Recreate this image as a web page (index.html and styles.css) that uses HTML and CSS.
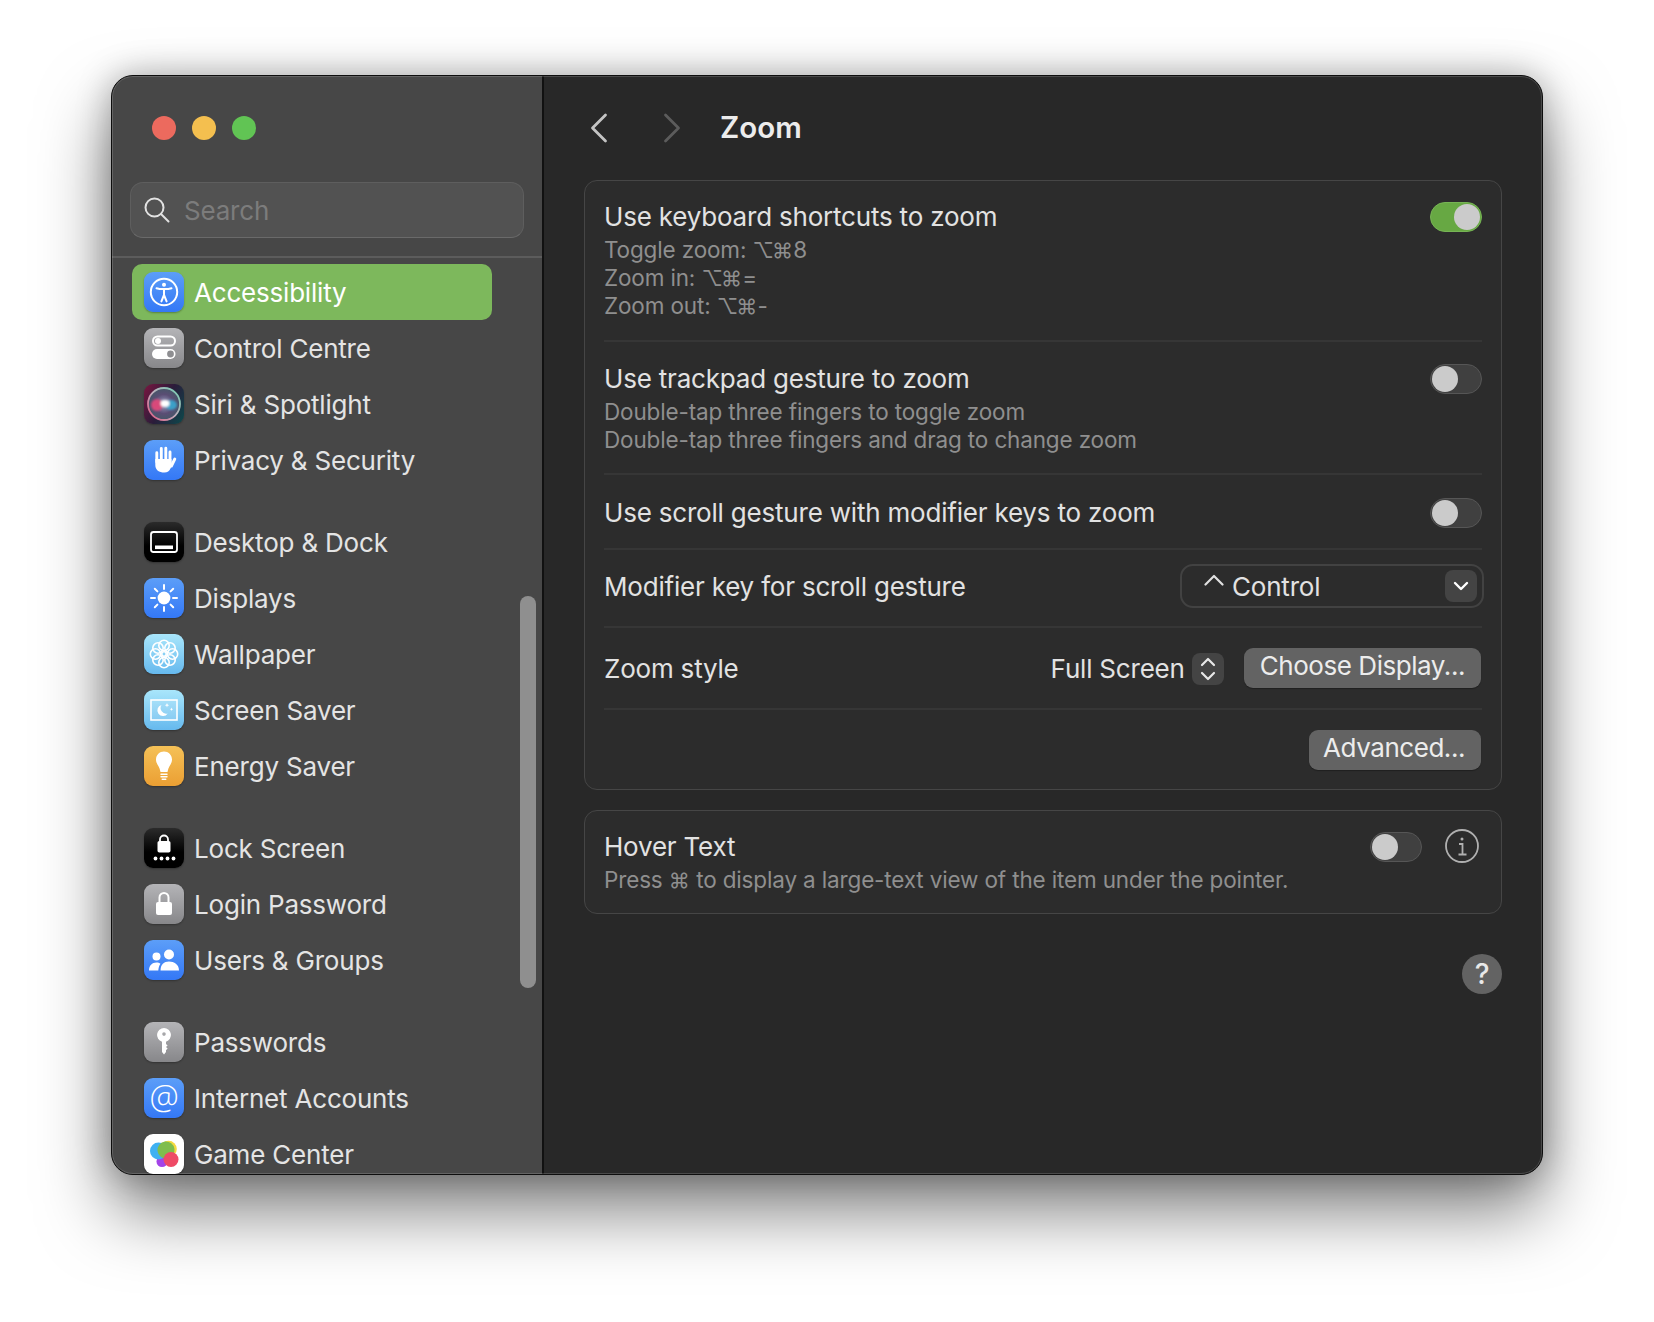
FILE: index.html
```html
<!DOCTYPE html>
<html lang="en">
<head>
<meta charset="utf-8">
<title>Zoom</title>
<link rel="stylesheet" href="styles.css">
</head>
<body>
<svg class="defs" width="0" height="0" aria-hidden="true">
  <defs>
    <radialGradient id="siriRing" cx="50%" cy="50%" r="50%">
      <stop offset="0%" stop-color="#9aa0c4"/>
      <stop offset="60%" stop-color="#5a4d74"/>
      <stop offset="100%" stop-color="#465668"/>
    </radialGradient>
    <linearGradient id="siriEdge" x1="0" y1="1" x2="1" y2="0">
      <stop offset="0%" stop-color="#e0557f"/>
      <stop offset="50%" stop-color="#c0aebd"/>
      <stop offset="100%" stop-color="#6ccfb0"/>
    </linearGradient>
    <filter id="soft"><feGaussianBlur stdDeviation="1.300"/></filter>
  </defs>
</svg>
<div class="window">
  <aside class="sidebar">
    <div class="lights">
      <span class="light red"></span><span class="light yellow"></span><span class="light green"></span>
    </div>
    <div class="search">
      <svg class="search-ico" viewBox="0 0 26 26" fill="none" stroke="#e2e2e2" stroke-width="2" stroke-linecap="round"><circle cx="10.500" cy="10.500" r="9"/><path d="M17 17 24.500 24.500"/></svg>
      <span class="search-text">Search</span>
    </div>
    <nav class="nav">
      <div class="group">
        <div class="item selected"><span class="icon blue">
          <svg viewBox="0 0 40 40" fill="none" stroke="#fff" stroke-width="2"><circle cx="20" cy="20" r="13.200"/><circle cx="20" cy="12.800" r="2" fill="#fff" stroke="none"/><path d="M12.500 16.200 C16 17.400 24 17.400 27.500 16.200" stroke-linecap="round"/><path d="M20 17v6M20 23l-2.600 6.400M20 23l2.600 6.400" stroke-linecap="round"/></svg>
        </span><span>Accessibility</span></div>
        <div class="item"><span class="icon gray">
          <svg viewBox="0 0 40 40"><rect x="9" y="8.500" width="22" height="9" rx="4.500" fill="none" stroke="#fff" stroke-width="2"/><circle cx="14" cy="13" r="3" fill="#fff"/><rect x="8" y="21" width="23.500" height="10" rx="5" fill="#fff"/><circle cx="26.500" cy="26" r="3.400" fill="#8e8e91"/></svg>
        </span><span>Control Centre</span></div>
        <div class="item"><span class="icon siri">
          <svg viewBox="0 0 40 40"><circle cx="20" cy="20" r="16" fill="url(#siriRing)" stroke="url(#siriEdge)" stroke-width="1.800"/><g filter="url(#soft)"><ellipse cx="13" cy="21" rx="6" ry="6" fill="#d9487a"/><ellipse cx="27" cy="21" rx="6" ry="5" fill="#3aa0c8"/><ellipse cx="21" cy="19.500" rx="4.500" ry="3.400" fill="#fff"/></g></svg>
        </span><span>Siri &amp; Spotlight</span></div>
        <div class="item"><span class="icon blue">
          <svg viewBox="0 0 40 40" fill="#fff" stroke="#fff" stroke-linecap="round"><path stroke-width="2.900" d="M12.800 22V12.800M17.300 20V8.500M21.800 20V8.200M26 22V12M27.400 26 30.800 19"/><path stroke="none" d="M11.300 19H27.500V24L29 23.500 26.500 28.500C25.400 30.900 23.400 32.500 20.500 32.500 15 32.500 11.300 30 11.300 25Z"/></svg>
        </span><span>Privacy &amp; Security</span></div>
      </div>
      <div class="group">
        <div class="item"><span class="icon black">
          <svg viewBox="0 0 40 40"><rect x="7" y="10" width="26" height="20" rx="2.500" fill="none" stroke="#fff" stroke-width="1.800"/><rect x="11" y="23.500" width="18" height="3.600" fill="#fff"/></svg>
        </span><span>Desktop &amp; Dock</span></div>
        <div class="item"><span class="icon blue">
          <svg viewBox="0 0 40 40" stroke="#fff" stroke-width="2" stroke-linecap="round"><circle cx="20" cy="20" r="6.400" fill="#fff" stroke="none"/><path d="M20 7v4M20 29v4M7 20h4M29 20h4M10.800 10.800l2.600 2.600M26.600 26.600l2.600 2.600M10.800 29.200l2.600-2.600M26.600 13.400l2.600-2.600"/></svg>
        </span><span>Displays</span></div>
        <div class="item"><span class="icon sky">
          <svg viewBox="0 0 40 40" fill="none" stroke="#fff" stroke-width="1.600"><circle cx="20" cy="20" r="2.200"/><circle cx="20" cy="11.500" r="5.200"/><circle cx="26" cy="14" r="5.200"/><circle cx="28.500" cy="20" r="5.200"/><circle cx="26" cy="26" r="5.200"/><circle cx="20" cy="28.500" r="5.200"/><circle cx="14" cy="26" r="5.200"/><circle cx="11.500" cy="20" r="5.200"/><circle cx="14" cy="14" r="5.200"/></svg>
        </span><span>Wallpaper</span></div>
        <div class="item"><span class="icon sky">
          <svg viewBox="0 0 40 40"><rect x="7" y="10" width="26" height="20" fill="#ffffff22" stroke="#fff" stroke-width="1.600"/><path fill="#fff" d="M17.500 15a5.600 5.600 0 1 0 6.200 8.400 5.600 5.600 0 0 1-6.200-8.400Z"/><path fill="#fff" d="M23 13l.6 1.600 1.600.6-1.600.6-.6 1.600-.6-1.600-1.600-.6 1.600-.6ZM27.500 17.600l.5 1.200 1.200.5-1.200.5-.5 1.200-.5-1.200-1.200-.5 1.200-.5Z"/></svg>
        </span><span>Screen Saver</span></div>
        <div class="item"><span class="icon orange">
          <svg viewBox="0 0 40 40" fill="#fff"><path d="M20 5.500C15.600 5.500 12 9 12 13.500 12 18 15.500 20 16.500 26H23.500C24.500 20 28 18 28 13.500 28 9 24.400 5.500 20 5.500Z"/><rect x="16.300" y="27.400" width="7.400" height="1.500" rx=".7"/><rect x="16.300" y="30" width="7.400" height="1.500" rx=".7"/><rect x="17.500" y="32.500" width="5" height="1.500" rx=".7"/></svg>
        </span><span>Energy Saver</span></div>
      </div>
      <div class="group">
        <div class="item"><span class="icon black">
          <svg viewBox="0 0 40 40" fill="#fff"><path d="M16 14v-2.500a4 4 0 0 1 8 0V14" fill="none" stroke="#fff" stroke-width="1.800"/><rect x="13.500" y="13" width="13" height="11.500" rx="1.800"/><circle cx="11.500" cy="30.500" r="1.900"/><circle cx="17.500" cy="30.500" r="1.900"/><circle cx="23.500" cy="30.500" r="1.900"/><circle cx="29.500" cy="30.500" r="1.900"/></svg>
        </span><span>Lock Screen</span></div>
        <div class="item"><span class="icon gray">
          <svg viewBox="0 0 40 40" fill="#fff"><path d="M15.500 19v-5.500a4.500 4.500 0 0 1 9 0V19" fill="none" stroke="#fff" stroke-width="2"/><rect x="12" y="18" width="16" height="13" rx="2"/></svg>
        </span><span>Login Password</span></div>
        <div class="item"><span class="icon blue">
          <svg viewBox="0 0 40 40" fill="#fff"><circle cx="25" cy="14.500" r="5"/><path d="M16.500 30.500C16.500 24.500 20 21.500 25 21.500 30 21.500 35 24.500 35 30.500Z"/><circle cx="12.500" cy="16.500" r="4"/><path d="M5 30.500C5 25.500 8 22.500 12.500 22.500 14 22.500 15.500 23 16.500 23.700 15 25.500 14.500 28 14.300 30.500Z"/></svg>
        </span><span>Users &amp; Groups</span></div>
      </div>
      <div class="group">
        <div class="item"><span class="icon gray">
          <svg viewBox="0 0 40 40" fill="#fff"><path fill-rule="evenodd" d="M20 6a7 7 0 0 1 2 13.700V22l1.600 1.600-1.600 1.500 1.600 1.500-1.600 1.600V30l-2 2.400L18 30V19.700A7 7 0 0 1 20 6Zm0 4.300a1.800 1.800 0 1 0 0 3.600 1.800 1.800 0 0 0 0-3.600Z"/></svg>
        </span><span>Passwords</span></div>
        <div class="item"><span class="icon blue at">@</span><span>Internet Accounts</span></div>
        <div class="item"><span class="icon white">
          <svg viewBox="0 0 40 40"><circle cx="18" cy="27.500" r="5.500" fill="#a344e8"/><circle cx="14.500" cy="17" r="8.500" fill="#3fb1f2"/><circle cx="24.500" cy="15" r="8.300" fill="#f4d93e"/><path d="M21 7.500a8.400 8.400 0 0 1 2 17 8.500 8.500 0 0 1-2-17Z" fill="#7fbd4d"/><circle cx="27" cy="25.500" r="7.500" fill="#ee4a66"/></svg>
        </span><span>Game Center</span></div>
      </div>
    </nav>
    <div class="scrollbar"></div>
  </aside>
  <main class="main">
    <header class="topbar">
      <svg class="chev" viewBox="0 0 18 30" fill="none" stroke="#c4c4c4" stroke-width="2.800" stroke-linecap="round" stroke-linejoin="round"><path d="M15.500 2 2.500 15 15.500 28"/></svg>
      <svg class="chev chev-off" viewBox="0 0 18 30" fill="none" stroke="#5c5c5c" stroke-width="2.800" stroke-linecap="round" stroke-linejoin="round"><path d="M2.500 2 15.500 15 2.500 28"/></svg>
      <h1 class="title">Zoom</h1>
    </header>
    <section class="card">
      <div class="row row-tall row-first">
        <div class="copy">
          <div class="label">Use keyboard shortcuts to zoom</div>
          <div class="sub">Toggle zoom: <span class="mods">⌥⌘</span>8</div>
          <div class="sub">Zoom in: <span class="mods">⌥⌘</span>=</div>
          <div class="sub">Zoom out: <span class="mods">⌥⌘</span>-</div>
        </div>
        <span class="toggle on"><span class="knob"></span></span>
      </div>
      <div class="row row-tall row-second">
        <div class="copy">
          <div class="label">Use trackpad gesture to zoom</div>
          <div class="sub">Double-tap three fingers to toggle zoom</div>
          <div class="sub">Double-tap three fingers and drag to change zoom</div>
        </div>
        <span class="toggle"><span class="knob"></span></span>
      </div>
      <div class="row row-scroll">
        <div class="label">Use scroll gesture with modifier keys to zoom</div>
        <span class="toggle"><span class="knob"></span></span>
      </div>
      <div class="row row-modifier">
        <div class="label label-low">Modifier key for scroll gesture</div>
        <div class="select">
          <svg class="caret" viewBox="0 0 20 12" fill="none" stroke="#e0e0e0" stroke-width="2.200" stroke-linecap="round" stroke-linejoin="round"><path d="M1.500 10.500 10 2l8.500 8.500"/></svg>
          <span class="select-text">Control</span>
          <span class="select-btn"><svg viewBox="0 0 16 10" fill="none" stroke="#fff" stroke-width="2.400" stroke-linecap="round" stroke-linejoin="round"><path d="M2 2l6 6 6-6"/></svg></span>
        </div>
      </div>
      <div class="row row-style">
        <div class="label label-low">Zoom style</div>
        <div class="style-ctrl">
          <span class="label label-low">Full Screen</span>
          <span class="stepper"><svg viewBox="0 0 16 28" fill="none" stroke="#e8e8e8" stroke-width="2.200" stroke-linecap="round" stroke-linejoin="round"><path d="M2 10l6-6 6 6M2 18l6 6 6-6"/></svg></span>
          <span class="btn btn-display">Choose Display...</span>
        </div>
      </div>
      <div class="row row-adv">
        <span class="btn btn-adv">Advanced...</span>
      </div>
    </section>
    <section class="card card-hover">
      <div class="hover-row">
        <div class="copy">
          <div class="label">Hover Text</div>
          <div class="sub sub-hover">Press <span class="mods">⌘</span> to display a large-text view of the item under the pointer.</div>
        </div>
        <div class="hover-ctrl">
          <span class="toggle"><span class="knob"></span></span>
          <svg class="info" viewBox="0 0 34 34" fill="none" stroke="#b0b0b0" stroke-width="1.800"><circle cx="17" cy="17" r="16"/><circle cx="17" cy="10" r="1.500" fill="#b0b0b0" stroke="none"/><path d="M14 15h3.500v10M13.500 25.500h8" /></svg>
        </div>
      </div>
    </section>
    <div class="help-wrap"><span class="help">?</span></div>
  </main>
</div>
</body>
</html>
```

FILE: styles.css
```css
* { box-sizing: border-box; }
html, body { margin: 0; height: 100%; background: #fff; overflow: hidden; }
body {
  padding: 75px 0 0 111px;
  font-family: Inter, "Noto Sans", "DejaVu Sans", sans-serif;
  font-size: 26px;
  letter-spacing: -.2px;
  color: #e2e2e2;
  background: #fff;
}
.defs { position: absolute; }
.window {
  position: relative;
  display: flex;
  width: 1432px;
  height: 1100px;
  border: 1px solid #0e0e0e;
  border-radius: 22px;
  overflow: hidden;
  background: #282828;
  box-shadow: 0 36px 70px rgba(0, 0, 0, .5), 0 0 34px rgba(0, 0, 0, .28);
}
.window::after {
  content: "";
  position: absolute;
  inset: 0;
  border: 1px solid rgba(255, 255, 255, .16);
  border-radius: 21px;
  pointer-events: none;
}

/* sidebar */
.sidebar {
  position: relative;
  flex: 0 0 432px;
  background: #474747;
  border-right: 2px solid #111;
  overflow: hidden;
}
.lights { display: flex; gap: 16px; padding: 40px 0 0 40px; height: 106px; }
.light { width: 24px; height: 24px; border-radius: 50%; }
.red { background: #ec6a5e; }
.yellow { background: #f4bf4f; }
.green { background: #61c454; }
.search {
  display: flex;
  align-items: center;
  gap: 14px;
  height: 56px;
  margin: 0 18px 0 18px;
  padding-left: 13px;
  border: 1px solid #5e5e5e;
  border-bottom-color: #6a6a6a;
  border-radius: 13px;
  background: #525252;
}
.search-ico { width: 26px; height: 26px; flex: none; }
.search-text { color: #7c7c7c; font-size: 26px; }
.nav {
  margin-top: 18px;
  padding: 6px 0 0 20px;
  border-top: 2px solid #5c5c5c;
  display: flex;
  flex-direction: column;
  gap: 26px;
}
.item {
  display: flex;
  align-items: center;
  gap: 10px;
  width: 360px;
  height: 56px;
  padding-left: 12px;
  border-radius: 10px;
  color: #e4e4e4;
  font-size: 26px;
  white-space: nowrap;
}
.item.selected { background: #7db85c; color: #fff; }
.icon {
  flex: none;
  display: block;
  width: 40px;
  height: 40px;
  border-radius: 9px;
  box-shadow: 0 1px 2px rgba(0, 0, 0, .3);
}
.icon svg { display: block; width: 40px; height: 40px; border-radius: 9px; }
.blue { background: linear-gradient(#5c9ef8, #3478f6); }
.gray { background: linear-gradient(#b4b4b7, #87878a); }
.black { background: linear-gradient(#2b2b2b, #000 60%); }
.sky { background: linear-gradient(#a9e6fb, #66b9ee); }
.orange { background: linear-gradient(#f5c157, #eb9f33); }
.white { background: #fff; }
.siri { background: linear-gradient(120deg, #7a1640 0%, #2a1c3a 50%, #0b4a4c 100%); }
.at {
  display: flex;
  align-items: center;
  justify-content: center;
  padding-bottom: 3px;
  color: #fff;
  font-family: "Open Sans", sans-serif;
  font-weight: 300;
  font-size: 33px;
  line-height: 1;
  letter-spacing: 0;
}
.scrollbar {
  position: absolute;
  left: 408px;
  top: 520px;
  width: 16px;
  height: 392px;
  border-radius: 8px;
  background: #8f8f8f;
}

/* main */
.main { flex: 1; padding: 0 40px 0 40px; background: #282828; min-width: 0; }
.topbar { display: flex; align-items: center; height: 104px; }
.chev { flex: none; width: 18px; height: 30px; margin-left: 6px; }
.chev-off { margin-left: 55px; }
.title { margin: -2px 0 0 39px; font-size: 29.500px; font-weight: 600; color: #ececec; letter-spacing: 0; }
.card {
  border: 1px solid #464646;
  border-radius: 13px;
  background: #2c2c2c;
  padding: 0 19px;
}
.row {
  display: flex;
  align-items: center;
  justify-content: space-between;
  border-bottom: 2px solid #363636;
}
.row:last-child { border-bottom: 0; }
.row-tall { align-items: flex-start; }
.row-first { padding: 21px 0 20px; }
.row-second { padding: 22px 0 19px; }
.row-scroll { height: 75px; padding-top: 2px; }
.row-modifier { padding: 14px 0 18px; }
.row-style { padding: 20px 0 20px; }
.row-adv { justify-content: flex-end; padding: 20px 1px 19px 0; }
.label { line-height: 30px; color: #e2e2e2; font-size: 26px; white-space: nowrap; }
.label-low { padding-top: 2px; }
.sub { line-height: 28px; height: 28px; color: #8f8f8f; font-size: 22.500px; letter-spacing: -.15px; white-space: nowrap; }
.label + .sub { margin-top: 4px; }
.mods { font-size: 21px; line-height: 1; letter-spacing: -1.800px; margin-right: 2px; }
.toggle {
  position: relative;
  flex: none;
  display: block;
  width: 52px;
  height: 30px;
  border: 1px solid #565656;
  border-radius: 15px;
  background: #404040;
}
.toggle.on { background: #67a843; border-color: #77b455; }
.knob {
  position: absolute;
  left: 1px;
  top: 1px;
  width: 26px;
  height: 26px;
  border-radius: 50%;
  background: #cbcbcb;
}
.on .knob { left: 23px; }
.select {
  display: flex;
  align-items: center;
  width: 304px;
  height: 44px;
  margin-right: -2px;
  padding: 0 5px 0 22px;
  border: 2px solid #424242;
  border-radius: 13px;
}
.caret { flex: none; width: 20px; height: 12px; margin-bottom: 12px; }
.select-text { margin-left: 8px; flex: 1; color: #e2e2e2; }
.select-btn {
  display: flex;
  align-items: center;
  justify-content: center;
  width: 32px;
  height: 32px;
  border-radius: 8px;
  background: #444;
}
.select-btn svg { width: 16px; height: 10px; }
.style-ctrl { display: flex; align-items: center; margin-right: 1px; }
.stepper {
  display: flex;
  align-items: center;
  justify-content: center;
  width: 32px;
  height: 32px;
  margin-left: 7px;
  margin-top: 2px;
  border-radius: 8px;
  background: #444;
}
.stepper svg { width: 16px; height: 28px; }
.btn {
  display: block;
  height: 40px;
  padding: 0 16px;
  border-radius: 9px;
  background: #636363;
  color: #ececec;
  line-height: 36px;
  font-size: 26px;
  letter-spacing: -.45px;
  white-space: nowrap;
  box-shadow: 0 1px 1px rgba(0, 0, 0, .3);
}
.btn-display { margin-left: 20px; }
.btn-adv { padding-left: 14px; }
.card-hover { margin-top: 20px; }
.hover-row {
  display: flex;
  justify-content: space-between;
  align-items: flex-start;
  padding: 21px 0 19px;
}
.hover-ctrl { display: flex; align-items: flex-start; gap: 23px; margin-right: 3px; }
.info { flex: none; width: 34px; height: 34px; margin-top: -3px; }
.help-wrap { display: flex; justify-content: flex-end; margin-top: 40px; }
.help {
  display: block;
  width: 40px;
  height: 40px;
  border-radius: 50%;
  background: #636363;
  color: #e8e8e8;
  text-align: center;
  font-size: 28px;
  font-weight: 500;
  line-height: 40px;
}
```
